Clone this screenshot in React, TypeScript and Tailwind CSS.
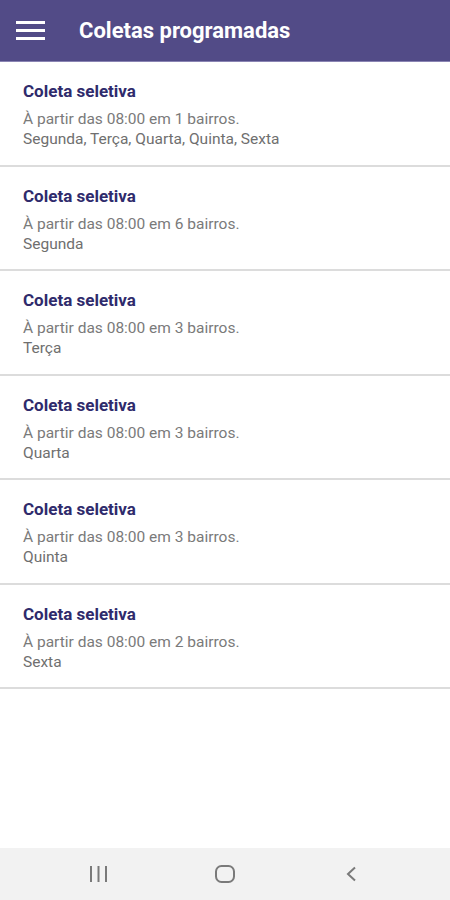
import React from "react";

const coletas = [
  { bairros: 1, dias: "Segunda, Terça, Quarta, Quinta, Sexta" },
  { bairros: 6, dias: "Segunda" },
  { bairros: 3, dias: "Terça" },
  { bairros: 3, dias: "Quarta" },
  { bairros: 3, dias: "Quinta" },
  { bairros: 2, dias: "Sexta" },
];

const App = () => {
  return (
    <div className="flex h-[900px] w-[450px] flex-col bg-white font-['Roboto',sans-serif]">
      <header className="flex h-[62px] shrink-0 items-center border-b border-[#8a84b3] bg-[#524b87]">
        <div className="ml-[16px] flex w-[29px] flex-col gap-[5px]">
          <span className="h-[3px] bg-white"></span>
          <span className="h-[3px] bg-white"></span>
          <span className="h-[3px] bg-white"></span>
        </div>
        <h1 className="ml-[34px] text-[22px] font-bold text-white">Coletas programadas</h1>
      </header>
      <main className="flex-1">
        {coletas.map((c, i) => (
          <div
            key={i}
            className="flex h-[104.5px] flex-col border-b-2 border-[#dcdcdc] px-[23px] pt-[17px]"
          >
            <p className="text-[17px] leading-[24px] font-bold text-[#2f2b6c]">Coleta seletiva</p>
            <p className="mt-[6px] text-[15.5px] leading-[20px] text-[#7a7a7a]">
              À partir das 08:00 em {c.bairros} bairros.
            </p>
            <p className="text-[15.5px] leading-[20px] text-[#6f6f6f]">{c.dias}</p>
          </div>
        ))}
      </main>
      <nav className="flex h-[52px] shrink-0 items-center justify-center bg-[#f2f2f2]">
        <div className="flex w-[126px] justify-center">
          <svg width="20" height="18" viewBox="0 0 20 18">
            <rect x="1" y="1" width="2" height="16" fill="#7a7a7a" />
            <rect x="8.5" y="1" width="2" height="16" fill="#7a7a7a" />
            <rect x="16" y="1" width="2" height="16" fill="#7a7a7a" />
          </svg>
        </div>
        <div className="flex w-[126px] justify-center">
          <svg width="20" height="18" viewBox="0 0 20 18">
            <rect x="1" y="1" width="18" height="16" rx="5.5" fill="none" stroke="#7a7a7a" strokeWidth="2" />
          </svg>
        </div>
        <div className="flex w-[126px] justify-center">
          <svg width="14" height="20" viewBox="0 0 14 20">
            <path d="M11 3.5 L4 10 L11 16.5" fill="none" stroke="#7a7a7a" strokeWidth="2" />
          </svg>
        </div>
      </nav>
    </div>
  );
};

export default App;
